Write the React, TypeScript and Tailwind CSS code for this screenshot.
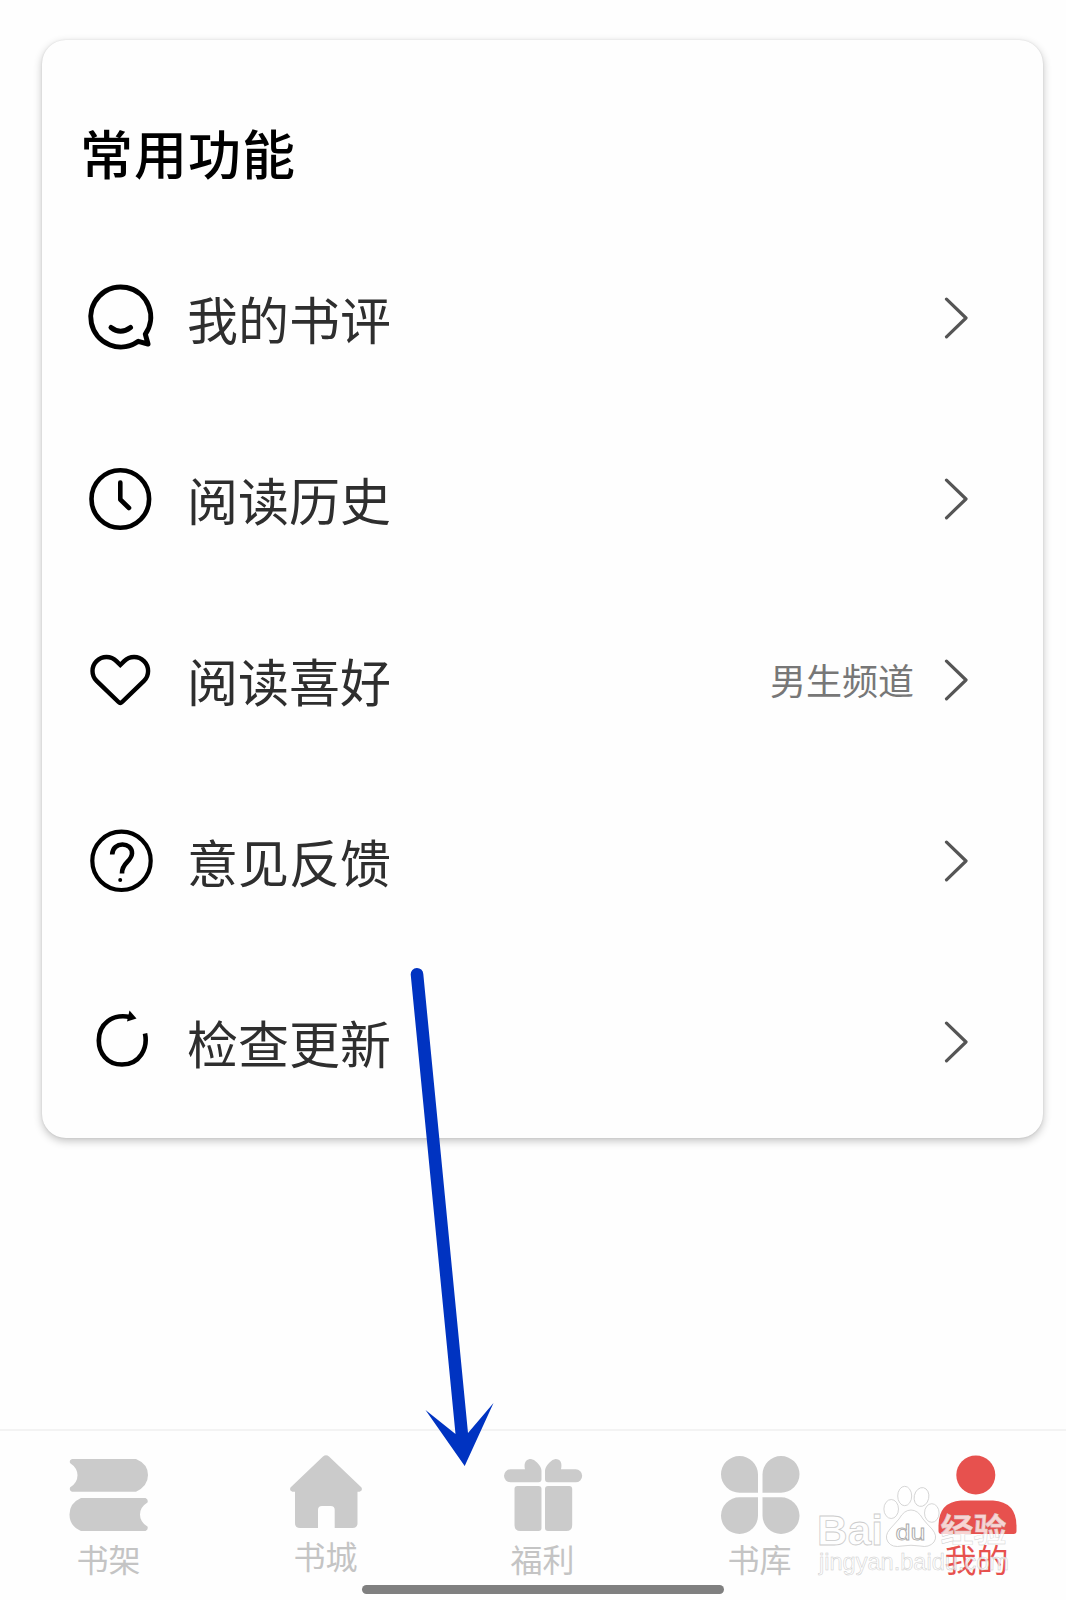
import type { ReactNode } from "react"

const iconStroke = {
  fill: "none",
  stroke: "#000",
  strokeLinecap: "round" as const,
  strokeLinejoin: "round" as const,
}

// --- Menu icons (72 x 72) ---
const CommentIcon = () => (
  <svg width="72" height="72" viewBox="0 0 72 72" {...iconStroke} strokeWidth="5">
    <path d="M54.3 59.3A30 30 0 1 1 61.3 52.2L64 62Z" />
    <path d="M27 45.5Q36.5 53 46.5 45.5" />
  </svg>
)

const HistoryIcon = () => (
  <svg width="72" height="72" viewBox="0 0 72 72" {...iconStroke} strokeWidth="4.6">
    <circle cx="36.3" cy="36" r="28.8" />
    <path d="M36.3 19.5V36.5L45 45" />
  </svg>
)

const HeartIcon = () => (
  <svg width="72" height="72" viewBox="0 0 72 72" {...iconStroke} strokeWidth="4.4" strokeLinejoin="miter">
    <path d="M36.3 21L32.4 17.1A14 14 0 0 0 12.6 36.9L34.5 58Q36.3 59.8 38.1 58L60 36.9A14 14 0 0 0 40.2 17.1Z" />
  </svg>
)

const HelpIcon = () => (
  <svg width="72" height="72" viewBox="0 0 72 72" {...iconStroke} strokeWidth="4.2">
    <circle cx="37.5" cy="35.8" r="29.2" />
    <path d="M28.2 29.5C28.5 16 48.5 16.500 48 28.500C47.500 37 37.500 37.500 38 48.500" strokeLinecap="butt" strokeWidth="4.600" />
    <circle cx="36.200" cy="55" r="2" fill="#000" stroke="none" />
  </svg>
)

const RefreshIcon = () => (
  <svg width="72" height="72" viewBox="0 0 72 72" {...iconStroke} strokeWidth="4.600">
    <path d="M61 27.500C64 42 56 58.500 38 58.500C23 58.500 14.800 47 14.800 34.500C14.800 18 28 7.500 46 11" strokeLinecap="butt" />
    <path d="M45.500 4.500L52.500 12.500L43 15.500Z" fill="#000" stroke="none" />
  </svg>
)

const ChevronIcon = () => (
  <svg width="24" height="42" viewBox="0 0 24 42" fill="none" stroke="#555" strokeWidth="3.200" strokeLinecap="round" strokeLinejoin="round">
    <path d="M2.500 2.200L22 21L2.500 39.800" />
  </svg>
)

// --- Tab icons (80 x 86) ---
const ShelfIcon = () => (
  <svg width="80" height="86" viewBox="0 0 80 86" fill="currentColor">
    <path d="M3 9H67Q79 14 79 25Q79 36 67 41.700H3Q0 40.500 1 37.500Q8.500 33 8.500 25.300Q8.500 18 1 13Q0 10 3 9Z" />
    <path d="M76.500 48H12Q0.500 53 0.500 64.500Q0.500 76 12 81H76.500Q79.500 79.500 78.500 76.500Q71 72 71 64.500Q71 57 78.500 52.500Q79.500 49.500 76.500 48Z" />
  </svg>
)

const HomeIcon = () => (
  <svg width="80" height="86" viewBox="0 0 80 86" fill="currentColor">
    <path d="M37 6.500Q40 4 43 6.500L75.500 37.500Q77 41 73.500 41.800H71.500V73Q71.500 78 66.500 78H48.700V60Q48.700 56 44.700 56H36Q32 56 32 60V78H14Q9 78 9 73V41.800H6.500Q3 41 4.500 37.500Z" />
  </svg>
)

const GiftIcon = () => (
  <svg width="80" height="86" viewBox="0 0 80 86" fill="currentColor">
    <path d="M7.500 19.300H22C20.500 13 23 9 28 9Q31 9 34 12.500Q38.500 17 38.500 21V29.300Q38.500 32.300 35.500 32.300H7.500A6.500 6.500 0 0 1 7.500 19.300Z" />
    <path d="M72.700 19.300H58C59.500 13 57.500 9 52.500 9Q49.500 9 46.500 12.500Q42 17 42 21V29.300Q42 32.300 45 32.300H72.700A6.500 6.500 0 0 0 72.700 19.300Z" />
    <path d="M14.500 36H35.500Q38.500 36 38.500 39V78Q38.500 81 35.500 81H17.500Q11.500 81 11.500 75V39Q11.500 36 14.500 36Z" />
    <path d="M45 36H66.200Q69.200 36 69.200 39V75Q69.200 81 63.200 81H45Q42 81 42 78V39Q42 36 45 36Z" />
  </svg>
)

const LibraryIcon = () => (
  <svg width="80" height="86" viewBox="0 0 80 86" fill="currentColor">
    <path d="M19.500 6A18.500 18.500 0 0 1 38 24.500V42.700H19.500A18.500 18.350 0 0 1 19.500 6Z" />
    <path d="M61 6A18.500 18.500 0 0 0 42.500 24.500V42.700H61A18.500 18.350 0 0 0 61 6Z" />
    <path d="M19.500 84A18.500 18.500 0 0 0 38 65.500V47.300H19.500A18.500 18.350 0 0 0 19.500 84Z" />
    <path d="M61 84A18.500 18.500 0 0 1 42.500 65.500V47.300H61A18.500 18.350 0 0 1 61 84Z" />
  </svg>
)

const UserIcon = () => (
  <svg width="80" height="86" viewBox="0 0 80 86" fill="currentColor">
    <circle cx="38.800" cy="25" r="19.500" />
    <path d="M24 50.500H56Q79.500 52 79.500 76V81Q79.500 84 76.500 84H4.500Q1.500 84 1.500 81V76Q1.500 52 24 50.500Z" />
  </svg>
)

interface MenuItem {
  label: string
  icon: ReactNode
  value?: string
}

const menuItems: MenuItem[] = [
  { label: "我的书评", icon: <CommentIcon /> },
  { label: "阅读历史", icon: <HistoryIcon /> },
  { label: "阅读喜好", icon: <HeartIcon />, value: "男生频道" },
  { label: "意见反馈", icon: <HelpIcon /> },
  { label: "检查更新", icon: <RefreshIcon /> },
]

const tabs = [
  { label: "书架", icon: <ShelfIcon />, gap: "pt-[4px]" },
  { label: "书城", icon: <HomeIcon />, gap: "pt-[1px]" },
  { label: "福利", icon: <GiftIcon />, gap: "pt-[4px]" },
  { label: "书库", icon: <LibraryIcon />, gap: "pt-[4px]" },
  { label: "我的", icon: <UserIcon />, gap: "pt-[4px]", active: true },
]

function Watermark() {
  return (
    <svg
      className="absolute left-[806px] top-[1480px] font-['Liberation_Sans','Noto_Sans_CJK_SC',sans-serif]"
      width="220"
      height="104"
      viewBox="806 1480 220 104"
      fill="#fff"
      stroke="#ccc"
      strokeWidth="0.8"
    >
      <g fillOpacity="0.75">
        <text x="817" y="1545" fontSize="43" fontWeight="700" textLength="66" lengthAdjust="spacingAndGlyphs">Bai</text>
        <ellipse cx="891.200" cy="1509" rx="7.300" ry="9.500" />
        <ellipse cx="904.700" cy="1496" rx="7" ry="9.700" />
        <ellipse cx="921.500" cy="1497" rx="7.300" ry="9.500" transform="rotate(12 921.500 1497)" />
        <ellipse cx="931.800" cy="1513" rx="7.300" ry="9.300" />
        <path d="M911 1510Q918 1510 923 1519Q927 1524 932 1529Q938 1536 934 1542Q929 1548 920 1546Q911 1544.500 902 1546Q892 1548 888 1542Q884 1536 890 1529L899 1519Q904 1510 911 1510Z" />
        <text x="895.500" y="1540" fontSize="22" fontWeight="400" stroke="#aaa" textLength="30" lengthAdjust="spacingAndGlyphs">du</text>
        <text x="940.500" y="1542" fontSize="33" fontWeight="700" strokeWidth="0.400" textLength="66">经验</text>
        <text x="819" y="1569.500" fontSize="24" strokeWidth="0.500" textLength="190" lengthAdjust="spacingAndGlyphs">jingyan.baidu.com</text>
      </g>
    </svg>
  )
}

export default function App() {
  return (
    <div className="relative flex h-[1600px] w-[1066px] flex-col overflow-hidden bg-[#fefefe] font-['Noto_Sans_CJK_SC',sans-serif]">
      <section className="ml-[42px] mt-[40px] h-[1098px] w-[1001px] shrink-0 rounded-[24px] bg-[#fefefe] shadow-[0_0_2px_rgba(0,0,0,0.1),0_3px_8px_rgba(0,0,0,0.24)]">
        <h2 className="h-[187px] pl-[38px] pt-[84px] text-[53px] font-medium leading-[56px] tracking-[1px] text-black">常用功能</h2>
        <ul>
          {menuItems.map((item) => (
            <li key={item.label} className="flex h-[181px] items-center pl-[42px] pr-[75px]">
              {item.icon}
              <span className="ml-[31px] text-[51px] leading-[56px] text-[#2e2e2e]">{item.label}</span>
              <span className="ml-auto mr-[30px] pb-[2px] text-[36px] leading-[40px] text-[#777]">{item.value}</span>
              <ChevronIcon />
            </li>
          ))}
        </ul>
      </section>

      <nav className="mt-auto flex h-[171px] w-[1085px] shrink-0 border-t-2 border-[#f3f3f3]">
        {tabs.map((tab) => (
          <button
            key={tab.label}
            className={`flex w-[217px] flex-col items-center pt-[19px] ${tab.active ? "text-[#e7514e]" : "text-[#cbcbcb]"}`}
          >
            {tab.icon}
            <span className={`text-[32px] leading-[36px] ${tab.gap} ${tab.active ? "" : "text-[#c4c4c4]"}`}>{tab.label}</span>
          </button>
        ))}
      </nav>

      {/* Home indicator */}
      <div className="absolute bottom-[6px] left-[362px] h-[9px] w-[362px] rounded-full bg-[#808080]" />

      <Watermark />

      {/* Swipe pointer */}
      <svg className="absolute left-[400px] top-[960px]" width="100" height="520" viewBox="400 960 100 520" fill="#0033c1">
        <path d="M410.700 974.500A6.300 6.300 0 0 1 423.300 974L468 1433L493.500 1403L464.700 1466L425.500 1410L455.500 1434Z" />
      </svg>
    </div>
  )
}
